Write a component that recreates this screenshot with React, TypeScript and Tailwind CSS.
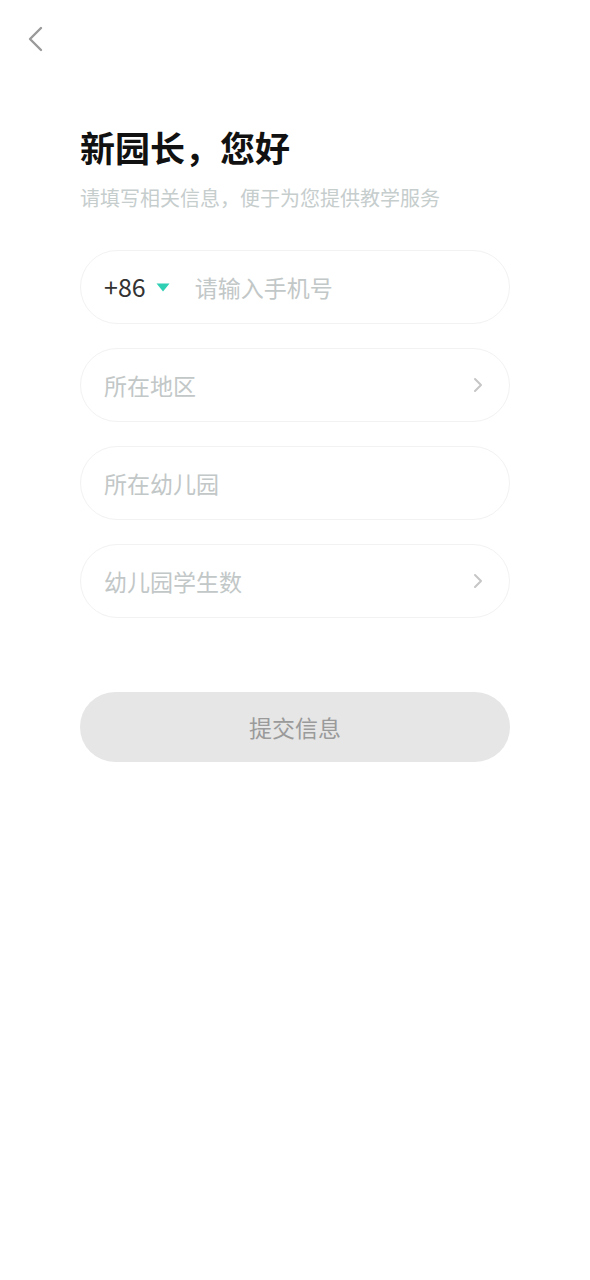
export default function App() {
  const font = { fontFamily: '"Noto Sans CJK SC", "Noto Sans", sans-serif' };
  return (
    <div className="min-h-screen w-full bg-white" style={font}>
      {/* Back */}
      <div className="pl-[26px] pt-[26px]">
        <svg width="18" height="26" viewBox="0 0 18 26" fill="none">
          <path d="M15 2 L4 13 L15 24" stroke="#9a9a9a" strokeWidth="2.4" strokeLinecap="round" strokeLinejoin="round" />
        </svg>
      </div>

      <div className="px-[80px]">
        <h1 className="mt-[77px] text-[35px] leading-[35px] font-bold text-[#111]">新园长，您好</h1>
        <p className="mt-[24px] text-[20px] leading-[20px] text-[#c6cdcd]">请填写相关信息，便于为您提供教学服务</p>

        <div className="mt-[42px] flex flex-col gap-[24px]">
          {/* Phone */}
          <div className="flex h-[74px] items-center rounded-full border border-[#f2f2f2] pl-[23px] pr-[26px]">
            <span className="text-[25px] text-[#333]">+86</span>
            <svg className="ml-[10px]" width="14" height="9" viewBox="0 0 14 9">
              <path d="M0.5 0.5 H13.5 L7 8.5 Z" fill="#2fcfb3" />
            </svg>
            <span className="ml-[25px] text-[23px] text-[#c2c7c7]">请输入手机号</span>
          </div>

          {/* Region */}
          <div className="flex h-[74px] items-center justify-between rounded-full border border-[#f2f2f2] pl-[23px] pr-[26px]">
            <span className="text-[23px] text-[#c2c7c7]">所在地区</span>
            <svg width="10" height="16" viewBox="0 0 10 16" fill="none">
              <path d="M2 2 L8 8 L2 14" stroke="#c6c6c6" strokeWidth="2" strokeLinecap="round" strokeLinejoin="round" />
            </svg>
          </div>

          {/* Kindergarten */}
          <div className="flex h-[74px] items-center rounded-full border border-[#f2f2f2] pl-[23px] pr-[26px]">
            <span className="text-[23px] text-[#c2c7c7]">所在幼儿园</span>
          </div>

          {/* Students */}
          <div className="flex h-[74px] items-center justify-between rounded-full border border-[#f2f2f2] pl-[23px] pr-[26px]">
            <span className="text-[23px] text-[#c2c7c7]">幼儿园学生数</span>
            <svg width="10" height="16" viewBox="0 0 10 16" fill="none">
              <path d="M2 2 L8 8 L2 14" stroke="#c6c6c6" strokeWidth="2" strokeLinecap="round" strokeLinejoin="round" />
            </svg>
          </div>
        </div>

        <button className="mt-[74px] flex h-[70px] w-full items-center justify-center rounded-full bg-[#e6e6e6] text-[23px] text-[#9a9a9a]">
          提交信息
        </button>
      </div>
    </div>
  );
}
